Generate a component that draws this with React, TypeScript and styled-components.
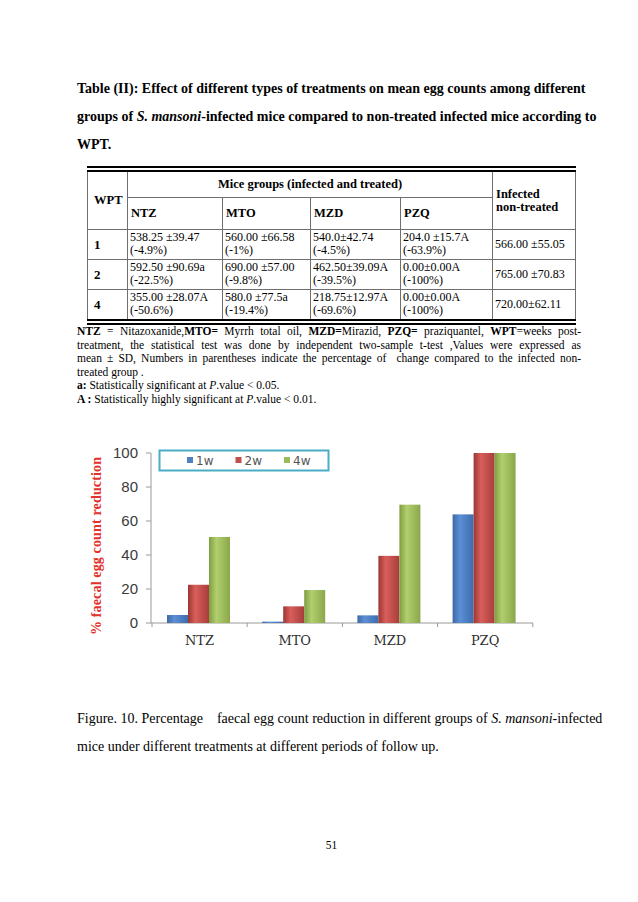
import React from 'react';
import styled, { createGlobalStyle } from 'styled-components';

const GlobalStyle = createGlobalStyle`
    html, body {
        margin: 0;
        padding: 0;
        background: #fff;
    }
    body {
        font-family: "Liberation Serif", "Times New Roman", serif;
        color: #000;
    }
`;

const Page = styled.div`
    width: 638px;
    height: 902px;
    box-sizing: border-box;
    padding: 75px 0 0 77px;
    background: #fff;
`;

const Block = styled.div<{ $size: number; $lh: number; $bold?: boolean; $mt?: number }>`
    width: 504px;
    font-size: ${({ $size }) => $size}px;
    line-height: ${({ $lh }) => $lh}px;
    font-weight: ${({ $bold }) => ($bold ? 700 : 400)};
    margin-top: ${({ $mt }) => $mt ?? 0}px;
`;

const Line = styled.span<{ $justify?: boolean }>`
    display: block;
    white-space: nowrap;
    text-align: ${({ $justify }) => ($justify ? 'justify' : 'left')};
    text-align-last: ${({ $justify }) => ($justify ? 'justify' : 'left')};
`;

const Table = styled.table`
    border-collapse: collapse;
    margin: 7px 0 0 10px;
    width: 488px;
    table-layout: fixed;
    border-top: 6px double #000;
    border-bottom: 6px double #000;
    font-size: 12px;
    line-height: 13px;
`;

const Th = styled.th<{ $center?: boolean; $h?: number }>`
    border: 1px solid #6f6f6f;
    font-weight: 700;
    font-size: 12.5px;
    text-align: ${({ $center }) => ($center ? 'center' : 'left')};
    vertical-align: middle;
    padding: 0 3px;
    height: ${({ $h }) => ($h ? `${$h}px` : 'auto')};
`;

const WeekCell = styled.td`
    border: 1px solid #6f6f6f;
    font-weight: 700;
    font-size: 13px;
    padding: 0 6px;
    vertical-align: middle;
`;

const Td = styled.td<{ $middle?: boolean }>`
    border: 1px solid #6f6f6f;
    padding: 1px 2px 2px 2px;
    vertical-align: ${({ $middle }) => ($middle ? 'middle' : 'top')};
    white-space: nowrap;
`;

const ChartWrap = styled.div`
    margin: 29px 0 0 1px;
    width: 504px;
    height: 230px;
`;

const PageNumber = styled.div`
    width: 504px;
    text-align: center;
    font-size: 11.5px;
    margin-top: 78px;
    padding-left: 5px;
    box-sizing: border-box;
`;

const rows = [
    { week: '1', cells: [['538.25 ±39.47', '(-4.9%)'], ['560.00 ±66.58', '(-1%)'], ['540.0±42.74', '(-4.5%)'], ['204.0 ±15.7A', '(-63.9%)']], ctrl: '566.00 ±55.05' },
    { week: '2', cells: [['592.50 ±90.69a', '(-22.5%)'], ['690.00 ±57.00', '(-9.8%)'], ['462.50±39.09A', '(-39.5%)'], ['0.00±0.00A', '(-100%)']], ctrl: '765.00 ±70.83' },
    { week: '4', cells: [['355.00 ±28.07A', '(-50.6%)'], ['580.0 ±77.5a', '(-19.4%)'], ['218.75±12.97A', '(-69.6%)'], ['0.00±0.00A', '(-100%)']], ctrl: '720.00±62.11' },
];

const groups = [
    { label: 'NTZ', v: [4.7, 22.5, 50.6] },
    { label: 'MTO', v: [0.8, 9.8, 19.4] },
    { label: 'MZD', v: [4.5, 39.5, 69.6] },
    { label: 'PZQ', v: [63.9, 100, 100] },
];

const series = [
    { name: '1w', grad: 'gBlue', color: '#4f81bd' },
    { name: '2w', grad: 'gRed', color: '#c0504d' },
    { name: '4w', grad: 'gGreen', color: '#9bbb59' },
];

const Chart: React.FC = () => {
    // viewBox uses page coordinates
    const base = 623;
    const scale = 1.7;
    const axisX = 151;
    return (
        <svg width="504" height="230" viewBox="78 435 504 230">
            <defs>
                <linearGradient id="gBlue" x1="0" x2="1" y1="0" y2="0">
                    <stop offset="0" stopColor="#3e6aa6" />
                    <stop offset="0.35" stopColor="#5c8fd5" />
                    <stop offset="1" stopColor="#3d6cae" />
                </linearGradient>
                <linearGradient id="gRed" x1="0" x2="1" y1="0" y2="0">
                    <stop offset="0" stopColor="#9c3633" />
                    <stop offset="0.35" stopColor="#d95f5b" />
                    <stop offset="1" stopColor="#a73d3a" />
                </linearGradient>
                <linearGradient id="gGreen" x1="0" x2="1" y1="0" y2="0">
                    <stop offset="0" stopColor="#7f9c43" />
                    <stop offset="0.35" stopColor="#b2cf6e" />
                    <stop offset="1" stopColor="#8aa84b" />
                </linearGradient>
            </defs>

            <text
                x="0"
                y="0"
                transform="translate(101 546) rotate(-90)"
                textAnchor="middle"
                textLength="178"
                fontFamily='"Liberation Serif", serif'
                fontWeight="700"
                fontSize="14"
                fill="#e3312b"
            >
                % faecal egg count reduction
            </text>

            {[0, 20, 40, 60, 80, 100].map((t) => {
                const y = base - t * scale;
                return (
                    <g key={t}>
                        <line x1={axisX - 5} x2={axisX} y1={y} y2={y} stroke="#9a9a9a" />
                        <text x="138" y={y + 5} textAnchor="end" fontFamily='"Liberation Sans", sans-serif' fontSize="15" fill="#3a3a3a">
                            {t}
                        </text>
                    </g>
                );
            })}
            <line x1={axisX} x2={axisX} y1={base - 100 * scale} y2={base} stroke="#9a9a9a" />
            <line x1={axisX} x2={533} y1={base} y2={base} stroke="#9a9a9a" />

            {groups.map((g, i) => {
                const start = 152 + i * 95.2;
                return (
                    <g key={g.label}>
                        <line x1={start + 95.2} x2={start + 95.2} y1={base} y2={base + 4} stroke="#9a9a9a" />
                        {g.v.map((v, j) => (
                            <rect
                                key={j}
                                x={start + 15 + j * 21}
                                y={base - v * scale}
                                width="21"
                                height={v * scale}
                                fill={`url(#${series[j].grad})`}
                            />
                        ))}
                        <text x={start + 47.5} y={645} textAnchor="middle" fontFamily='"DejaVu Serif", serif' fontSize="13" fill="#2e2e2e">
                            {g.label}
                        </text>
                    </g>
                );
            })}
            <line x1={152} x2={152} y1={base} y2={base + 4} stroke="#9a9a9a" />

            <rect x="159.5" y="450.5" width="169" height="20" fill="#fff" stroke="#4bacc6" strokeWidth="2" />
            {series.map((s, k) => (
                <g key={s.name}>
                    <rect x={187 + k * 48.5} y="457" width="6" height="6" fill={s.color} />
                    <text x={196 + k * 48.5} y="465" fontFamily='"DejaVu Sans", sans-serif' fontSize="12" fill="#555">
                        {s.name}
                    </text>
                </g>
            ))}
        </svg>
    );
};

const App: React.FC = () => (
    <>
        <GlobalStyle />
        <Page>
            <Block $size={14} $lh={28} $bold>
                <Line $justify>Table (II): Effect of different types of treatments on mean egg counts among different</Line>
                <Line $justify>groups of <i>S. mansoni</i>-infected mice compared to non-treated infected mice according to</Line>
                <Line>WPT.</Line>
            </Block>

            <Table>
                <colgroup>
                    <col style={{ width: 40 }} />
                    <col style={{ width: 95 }} />
                    <col style={{ width: 88 }} />
                    <col style={{ width: 90 }} />
                    <col style={{ width: 92 }} />
                    <col style={{ width: 83 }} />
                </colgroup>
                <thead>
                    <tr>
                        <Th rowSpan={2} style={{ paddingLeft: 6 }}>WPT</Th>
                        <Th colSpan={4} $center $h={25}>Mice groups (infected and treated)</Th>
                        <Th rowSpan={2}>Infected<br />non-treated</Th>
                    </tr>
                    <tr>
                        <Th $h={31}>NTZ</Th>
                        <Th>MTO</Th>
                        <Th>MZD</Th>
                        <Th>PZQ</Th>
                    </tr>
                </thead>
                <tbody>
                    {rows.map((r) => (
                        <tr key={r.week}>
                            <WeekCell>{r.week}</WeekCell>
                            {r.cells.map((c, i) => (
                                <Td key={i}>
                                    {c[0]}
                                    <br />
                                    {c[1]}
                                </Td>
                            ))}
                            <Td $middle>{r.ctrl}</Td>
                        </tr>
                    ))}
                </tbody>
            </Table>

            <Block $size={11.5} $lh={13.5}>
                <Line $justify>
                    <b>NTZ</b> = Nitazoxanide,<b>MTO=</b> Myrrh total oil, <b>MZD=</b>Mirazid, <b>PZQ=</b> praziquantel, <b>WPT</b>=weeks post-
                </Line>
                <Line $justify>treatment, the statistical test was done by independent two-sample t-test ,Values were expressed as</Line>
                <Line $justify>mean ± SD, Numbers in parentheses indicate the percentage of&nbsp; change compared to the infected non-</Line>
                <Line>treated group .</Line>
                <Line>
                    <b>a:</b> Statistically significant at <i>P</i>.value &lt; 0.05.
                </Line>
                <Line>
                    <b>A :</b> Statistically highly significant at <i>P</i>.value &lt; 0.01.
                </Line>
            </Block>

            <ChartWrap>
                <Chart />
            </ChartWrap>

            <Block $size={14} $lh={28} $mt={40}>
                <Line $justify>
                    Figure. 10. Percentage&nbsp;&nbsp;&nbsp; faecal egg count reduction in different groups of <i>S. mansoni</i>-infected
                </Line>
                <Line>mice under different treatments at different periods of follow up.</Line>
            </Block>

            <PageNumber>51</PageNumber>
        </Page>
    </>
);

export default App;
